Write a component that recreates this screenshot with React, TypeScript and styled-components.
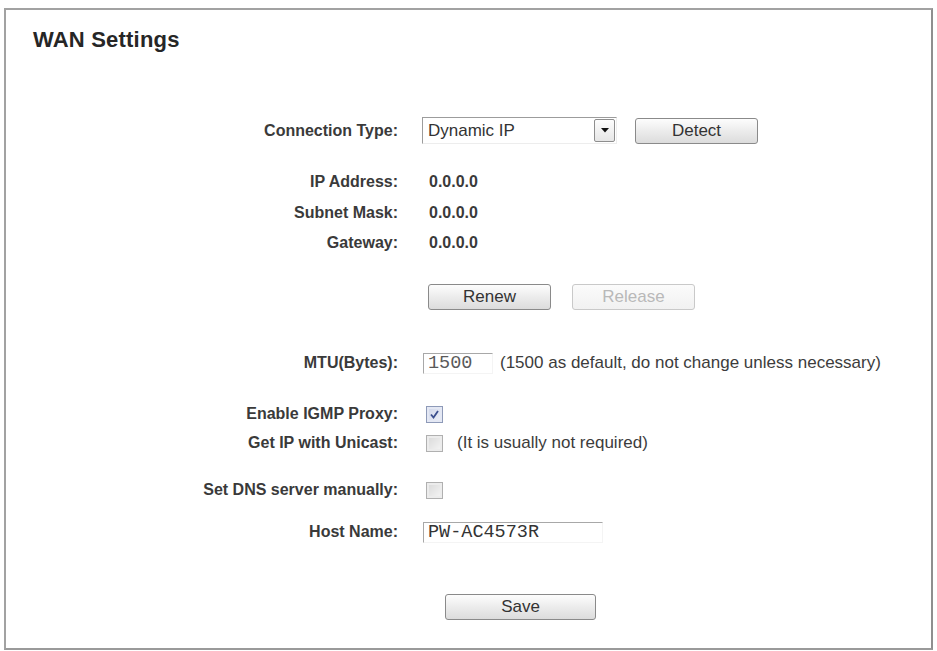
import React from "react";
import styled, { createGlobalStyle } from "styled-components";

const Global = createGlobalStyle`
  html, body { margin: 0; padding: 0; background: #ffffff; }
  body { font-family: "Liberation Sans", Arial, sans-serif; color: #333; }
`;

const Page = styled.div`
  padding: 8px 5px 0 4px;
  width: 937px;
  height: 651px;
  box-sizing: border-box;
`;

const Panel = styled.section`
  box-sizing: border-box;
  width: 929px;
  height: 642px;
  border: 2px solid #a2a2a2;
  border-right-color: #8f8f8f;
  border-bottom-color: #9a9a9a;
  display: flex;
  flex-direction: column;
`;

const Title = styled.h1`
  margin: 17px 0 0 27px;
  font-size: 22px;
  line-height: 26px;
  font-weight: bold;
  color: #262626;
  letter-spacing: 0.2px;
`;

const Row = styled.div<{ $top: number; $h: number }>`
  display: grid;
  grid-template-columns: 392px auto;
  column-gap: 25px;
  align-items: center;
  margin-top: ${(p) => p.$top}px;
  height: ${(p) => p.$h}px;
`;

const Label = styled.div`
  text-align: right;
  font-size: 16px;
  font-weight: bold;
  color: #3a3a3a;
  white-space: nowrap;
`;

const Field = styled.div<{ $indent?: number }>`
  display: flex;
  align-items: center;
  margin-left: ${(p) => p.$indent ?? 0}px;
  height: 100%;
`;

const Value = styled.span`
  font-size: 16px;
  font-weight: bold;
  color: #3a3a3a;
  padding-left: 6px;
`;

const Note = styled.span<{ $gap: number }>`
  font-size: 17px;
  color: #3c3c3c;
  margin-left: ${(p) => p.$gap}px;
  white-space: nowrap;
`;

const Select = styled.div`
  box-sizing: border-box;
  width: 195px;
  height: 27px;
  border-top: 1px solid #9c9c9c;
  border-left: 1px solid #9c9c9c;
  border-right: 1px solid #ededed;
  border-bottom: 1px solid #ededed;
  display: flex;
  align-items: center;
  justify-content: space-between;
  padding: 0 1px 0 5px;
  font-size: 17px;
  color: #333;
  margin-left: -1px;
`;

const Arrow = styled.div`
  box-sizing: border-box;
  width: 21px;
  height: 23px;
  border: 1px solid #8e8e8e;
  border-radius: 2px;
  background: linear-gradient(#fdfdfd, #e6e6e6);
  display: flex;
  align-items: center;
  justify-content: center;
`;

const Button = styled.button<{ $w: number; $gap?: number }>`
  box-sizing: border-box;
  width: ${(p) => p.$w}px;
  height: 26px;
  margin-left: ${(p) => p.$gap ?? 0}px;
  padding: 0;
  border: 1px solid #8a8a8a;
  border-radius: 3px;
  background: linear-gradient(#fdfdfd 0%, #ececec 50%, #dcdcdc 100%);
  font-family: "Liberation Sans", Arial, sans-serif;
  font-size: 17px;
  color: #333;
  &:disabled {
    border-color: #c9c9c9;
    background: linear-gradient(#fbfbfb, #f1f1f1);
    color: #b9b9b9;
  }
`;

const TextInput = styled.div<{ $w: number; $color: string }>`
  box-sizing: border-box;
  width: ${(p) => p.$w}px;
  height: 21px;
  border-top: 1px solid #a8a8a8;
  border-left: 1px solid #a8a8a8;
  border-right: 1px solid #f4f4f4;
  border-bottom: 1px solid #f4f4f4;
  font-family: "Liberation Mono", "Courier New", monospace;
  font-size: 18.5px;
  line-height: 20px;
  color: ${(p) => p.$color};
  padding-left: 4px;
  white-space: nowrap;
  overflow: hidden;
`;

const Box = styled.span<{ $checked?: boolean }>`
  box-sizing: border-box;
  width: 17px;
  height: 17px;
  border: 1px solid ${(p) => (p.$checked ? "#8e9ab8" : "#b0b0b0")};
  background: ${(p) =>
    p.$checked
      ? "linear-gradient(135deg, #cfd6ea, #eef1f8)"
      : "linear-gradient(135deg, #d8d8d8, #f6f6f6)"};
  box-shadow: inset 0 0 0 2px ${(p) => (p.$checked ? "#e4e8f4" : "#ececec")};
  display: inline-flex;
  align-items: center;
  justify-content: center;
  margin-left: 3px;
`;

const Check = ({ checked }: { checked?: boolean }) => (
  <Box $checked={checked}>
    {checked && (
      <svg width="11" height="11" viewBox="0 0 11 11">
        <path d="M2 5.5 L4.5 8.5 L9 2" fill="none" stroke="#3b4f8e" strokeWidth="1.8" />
      </svg>
    )}
  </Box>
);

export default function App() {
  return (
    <Page>
      <Global />
      <Panel>
        <Title>WAN Settings</Title>

        <Row $top={64} $h={27}>
          <Label>Connection Type:</Label>
          <Field>
            <Select>
              <span>Dynamic IP</span>
              <Arrow>
                <svg width="8" height="5" viewBox="0 0 8 5">
                  <path d="M0 0 H8 L4 4.5 Z" fill="#111" />
                </svg>
              </Arrow>
            </Select>
            <Button $w={123} $gap={18}>Detect</Button>
          </Field>
        </Row>

        <Row $top={27} $h={22}>
          <Label>IP Address:</Label>
          <Field><Value>0.0.0.0</Value></Field>
        </Row>
        <Row $top={9} $h={22}>
          <Label>Subnet Mask:</Label>
          <Field><Value>0.0.0.0</Value></Field>
        </Row>
        <Row $top={8} $h={22}>
          <Label>Gateway:</Label>
          <Field><Value>0.0.0.0</Value></Field>
        </Row>

        <Row $top={30} $h={26}>
          <div />
          <Field $indent={5}>
            <Button $w={123}>Renew</Button>
            <Button $w={123} $gap={21} disabled>Release</Button>
          </Field>
        </Row>

        <Row $top={42} $h={22}>
          <Label>MTU(Bytes):</Label>
          <Field>
            <TextInput $w={70} $color="#5a5a5a">1500</TextInput>
            <Note $gap={7}>(1500 as default, do not change unless necessary)</Note>
          </Field>
        </Row>

        <Row $top={29} $h={22}>
          <Label>Enable IGMP Proxy:</Label>
          <Field><Check checked /></Field>
        </Row>
        <Row $top={7} $h={22}>
          <Label>Get IP with Unicast:</Label>
          <Field>
            <Check />
            <Note $gap={14}>(It is usually not required)</Note>
          </Field>
        </Row>

        <Row $top={25} $h={22}>
          <Label>Set DNS server manually:</Label>
          <Field><Check /></Field>
        </Row>

        <Row $top={20} $h={22}>
          <Label>Host Name:</Label>
          <Field>
            <TextInput $w={180} $color="#333">PW-AC4573R</TextInput>
          </Field>
        </Row>

        <Row $top={51} $h={26}>
          <div />
          <Field $indent={22}>
            <Button $w={151}>Save</Button>
          </Field>
        </Row>
      </Panel>
    </Page>
  );
}
